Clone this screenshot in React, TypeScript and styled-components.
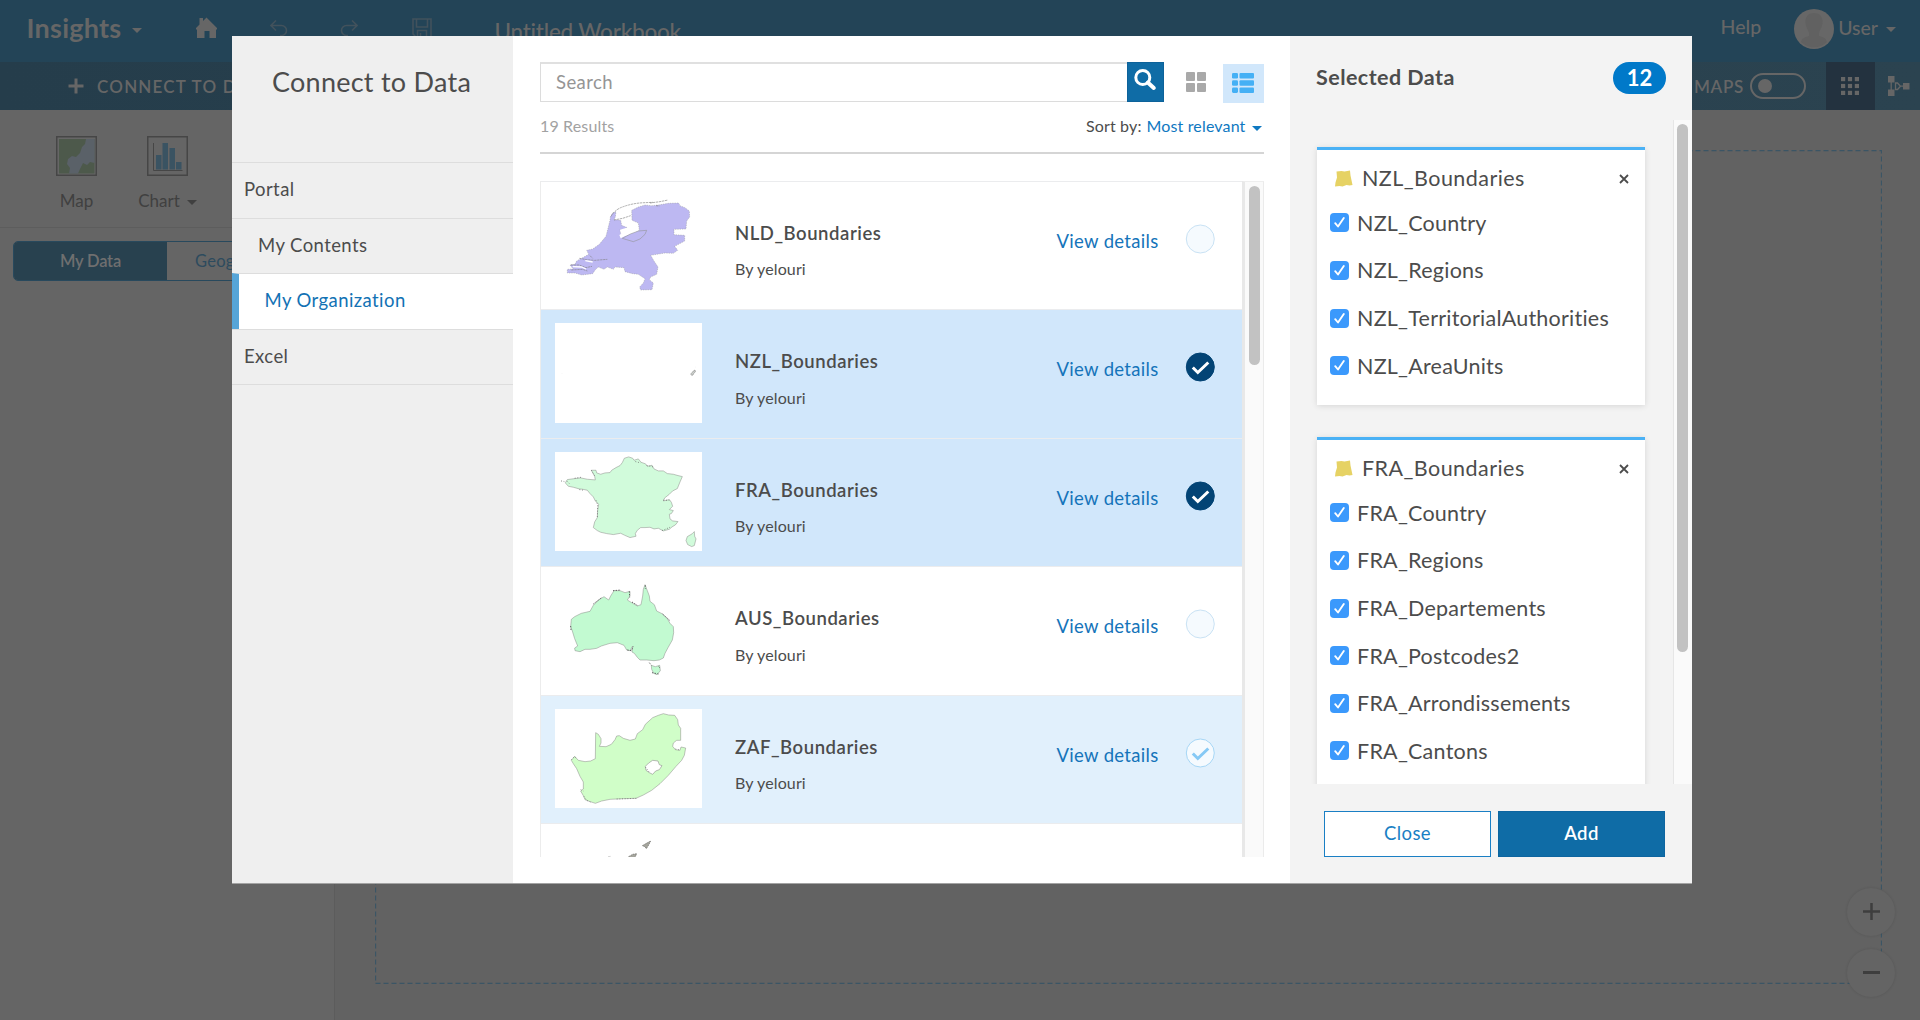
import React from 'react';
import styled, { createGlobalStyle } from 'styled-components';

const GlobalStyle = createGlobalStyle`
  *, *::before, *::after { box-sizing: border-box; }
  body { margin: 0; overflow: hidden; background: #626262; }
  svg { display: block; flex: none; }
`;

const Page = styled.div`
  width: 1920px;
  height: 1020px;
  display: flex;
  flex-direction: column;
  font-family: Lato, 'Open Sans', sans-serif;
  color: #666;
`;

/* ---------- Workbook behind the dialog ---------- */

const Header = styled.header`
  height: 62px;
  flex: none;
  display: flex;
  align-items: flex-start;
  justify-content: space-between;
  background: #234457;
`;

const HeaderGroup = styled.div`
  display: flex;
  align-items: flex-start;
`;

const HeaderText = styled.span<{ $size: number; $weight?: number; $top: number; $left: number; $spacing?: number }>`
  font-size: ${p => p.$size}px;
  line-height: 30px;
  font-weight: ${p => p.$weight ?? 400};
  letter-spacing: ${p => p.$spacing ?? 0}px;
  margin: ${p => p.$top}px 0 0 ${p => p.$left}px;
  white-space: nowrap;
`;

const HeaderIcon = styled.span<{ $top: number; $left: number }>`
  margin: ${p => p.$top}px 0 0 ${p => p.$left}px;
`;

const Caret = styled.i<{ $color: string; $drop?: number }>`
  display: block;
  width: 0;
  height: 0;
  margin-top: ${p => p.$drop ?? 0}px;
  border-left: 5px solid transparent;
  border-right: 5px solid transparent;
  border-top: 5px solid ${p => p.$color};
`;

const Toolbar = styled.div`
  height: 48px;
  flex: none;
  display: flex;
  justify-content: space-between;
  background: linear-gradient(90deg, #253d4b, #2b4350);
`;

const ConnectButton = styled.div`
  display: flex;
  align-items: center;
  gap: 13px;
  padding-left: 68px;
  font-size: 17px;
  font-weight: 600;
  letter-spacing: 1.2px;
`;

const ToolbarRight = styled.div`
  display: flex;
  align-items: center;
  font-size: 17px;
  font-weight: 600;
  letter-spacing: 0.7px;
`;

const Toggle = styled.span`
  width: 56px;
  height: 26px;
  margin: 0 20px 0 6px;
  padding: 4px 6px;
  border: 2px solid #666;
  border-radius: 13px;
`;

const Knob = styled.i`
  display: block;
  width: 14px;
  height: 14px;
  border-radius: 50%;
  background: #666;
`;

const ToolButton = styled.span<{ $active?: boolean }>`
  width: ${p => (p.$active ? 48.5 : 45.5)}px;
  height: 48px;
  display: flex;
  align-items: center;
  padding-left: ${p => (p.$active ? 15 : 13.5)}px;
  background: ${p => (p.$active ? '#23323f' : 'transparent')};
`;

const Workspace = styled.div`
  flex: 1;
  display: flex;
`;

const DataPane = styled.aside`
  width: 335px;
  border-right: 1px solid #5c5c5c;
  background: #656565;
`;

const CardTools = styled.div`
  height: 118px;
  display: flex;
  padding: 26px 0 0 48px;
  border-bottom: 1px solid #5d5d5d;
  color: #404040;
`;

const CardTool = styled.div`
  width: 57px;
  margin-right: 34px;
  display: flex;
  flex-direction: column;
  align-items: center;
  font-size: 17px;
  line-height: 20px;
  gap: 15px;
`;

const CardToolLabel = styled.span`
  display: flex;
  align-items: center;
  gap: 7px;
  white-space: nowrap;
`;

const Segmented = styled.div`
  width: 308px;
  height: 40px;
  margin: 13px 0 0 13px;
  display: flex;
  border: 1px solid #28495d;
  border-radius: 5px;
  overflow: hidden;
  font-size: 16.5px;
  line-height: 38px;
`;

const Segment = styled.span<{ $on?: boolean }>`
  width: 154px;
  padding-left: ${p => (p.$on ? 46 : 28)}px;
  background: ${p => (p.$on ? '#28414f' : 'transparent')};
  color: ${p => (p.$on ? '#6f6f6f' : '#2d4b5e')};
  font-weight: ${p => (p.$on ? 600 : 400)};
  letter-spacing: ${p => (p.$on ? -0.2 : 0.2)}px;
`;

const Canvas = styled.main`
  flex: 1;
  position: relative;
  padding: 40px 38px 36px 40px;
`;

const DropArea = styled.svg`
  width: 1507px;
  height: 834px;
`;

const ZoomStack = styled.div`
  position: absolute;
  right: 25px;
  bottom: 23px;
  display: flex;
  flex-direction: column;
  gap: 13px;
`;

const ZoomButton = styled.span`
  width: 48px;
  height: 48px;
  border-radius: 50%;
  display: flex;
  justify-content: center;
  padding-top: 14.5px;
  background: #646464;
  box-shadow: 0 0 3px rgba(0, 0, 0, 0.12);
`;

/* ---------- Dialog ---------- */

const Dialog = styled.section`
  position: fixed;
  left: 232px;
  top: 36px;
  width: 1460px;
  height: 848px;
  display: grid;
  grid-template-columns: 281px 777px 402px;
  grid-template-rows: 847px;
  border-bottom: 1px solid #a3a3a3;
  background: #fff;
  color: #4c4c4c;
`;

const Sources = styled.nav`
  background: #efefef;
`;

const DialogTitle = styled.h1`
  height: 126px;
  margin: 0;
  padding: 31px 0 0 40px;
  font-size: 27px;
  line-height: 30px;
  font-weight: 400;
  letter-spacing: 0.25px;
`;

const Source = styled.div<{ $indent: number; $active?: boolean }>`
  height: 55.6px;
  padding-left: ${p => p.$indent - (p.$active ? 7 : 0)}px;
  border-top: 1px solid #ddd;
  ${p => p.$active && 'border-left: 7px solid #56a5d8;'}
  background: ${p => (p.$active ? '#fff' : '#efefef')};
  color: ${p => (p.$active ? '#1272b4' : '#4c4c4c')};
  font-size: 18.5px;
  line-height: 53.5px;
  letter-spacing: 0.42px;
`;

const SourcesEnd = styled.div`
  border-top: 1px solid #ddd;
`;

const Browser = styled.div`
  min-height: 0;
  display: flex;
  flex-direction: column;
  padding: 26px 26.5px 26px 27px;
`;

const SearchRow = styled.div`
  display: flex;
  flex: none;
  height: 41px;
`;

const SearchField = styled.div`
  width: 587px;
  height: 40px;
  padding-left: 15px;
  border: 1px solid #dcdcdc;
  border-top: 2px solid #e0e0e0;
  border-right: 0;
  color: #959595;
  font-size: 18.5px;
  line-height: 36px;
  letter-spacing: 0.4px;
`;

const SearchButton = styled.span`
  width: 37.5px;
  height: 40px;
  padding: 6px 0 0 6px;
  background: #0f6ca6;
  border: 1px solid #0d629a;
`;

const ViewButton = styled.span<{ $on?: boolean }>`
  width: 41px;
  height: 39px;
  margin: ${p => (p.$on ? 2 : 1)}px 0 0 ${p => (p.$on ? 6.5 : 11)}px;
  padding-bottom: 1px;
  display: flex;
  align-items: center;
  justify-content: center;
  background: ${p => (p.$on ? '#d1e7fb' : 'transparent')};
`;

const ResultsBar = styled.div`
  height: 51px;
  flex: none;
  display: flex;
  justify-content: space-between;
  border-bottom: 2px solid #d5d5d5;
  font-size: 16px;
  line-height: 46.5px;
  letter-spacing: 0.15px;
`;

const Count = styled.span`
  color: #a2a2a2;
`;

const SortBy = styled.span`
  display: flex;
  align-items: center;
  height: 46px;
  padding-right: 2px;
`;

const SortValue = styled.span`
  color: #0f78c1;
  margin: 0 6px 0 5px;
`;

const ListFrame = styled.div`
  flex: 1;
  min-height: 0;
  margin-top: 26.5px;
  display: flex;
  overflow: hidden;
  border-left: 1px solid #ececec;
`;

const List = styled.div`
  flex: 1;
`;

const Item = styled.div<{ $tone: Tone }>`
  height: 128.5px;
  display: flex;
  align-items: flex-start;
  border-top: 1px solid #ebecee;
  background: ${p => (p.$tone === 'selected' ? '#d1e7fb' : p.$tone === 'hover' ? '#e1f0fc' : '#fff')};
`;

const Thumb = styled.svg`
  width: 147px;
  height: 99.5px;
  margin: 13.3px 33px 0 14px;
  background: #fff;
`;

const ItemText = styled.div`
  width: 321px;
  padding-top: 36.2px;
`;

const ItemTitle = styled.div`
  font-size: 18.5px;
  line-height: 30px;
  font-weight: 600;
  letter-spacing: 0.55px;
`;

const ItemOwner = styled.div`
  margin-top: 6.5px;
  font-size: 16px;
  line-height: 30px;
  letter-spacing: 0.12px;
`;

const Details = styled.span`
  width: 129px;
  padding-top: 44.2px;
  padding-left: 0.5px;
  color: #1574ba;
  font-size: 18.5px;
  line-height: 30px;
  letter-spacing: 0.32px;
`;

const Pick = styled.svg`
  width: 30px;
  height: 30px;
  margin-top: 42px;
`;

const ListScroll = styled.div`
  width: 22px;
  padding: 4px 3px 0 4px;
  border-top: 1px solid #eee;
  border-left: 3px solid #e8e8e8;
  border-right: 1px solid #ebebeb;
  background: #fafafa;
`;

const ScrollThumb = styled.div<{ $h: number }>`
  width: 11px;
  height: ${p => p.$h}px;
  border-radius: 6px;
  background: #c2c2c2;
`;

const Selection = styled.aside`
  display: flex;
  flex-direction: column;
  background: #f3f3f3;
`;

const SelectionHead = styled.div`
  height: 84px;
  padding: 26px 26px 0 26px;
  display: flex;
  justify-content: space-between;
  align-items: flex-start;
  font-size: 21.5px;
  line-height: 31px;
  font-weight: 700;
  letter-spacing: 0.45px;
`;

const Badge = styled.span`
  width: 53px;
  height: 32px;
  border-radius: 16px;
  background: #0079c9;
  color: #fff;
  text-align: center;
  font-size: 22px;
  line-height: 31px;
  letter-spacing: 0;
`;

const SelectionBody = styled.div`
  height: 664px;
  flex: none;
  display: flex;
  justify-content: space-between;
  overflow: hidden;
`;

const Cards = styled.div`
  padding: 27px 0 0 27px;
`;

const SelectionScroll = styled.div`
  width: 19px;
  padding: 4px 0 0 3px;
  border-left: 1px solid #e6e6e6;
  background: #fafafa;
`;

const Card = styled.div`
  width: 328px;
  margin-bottom: 32px;
  padding-bottom: 13.4px;
  border-top: 3px solid #4ab1f5;
  background: #fff;
  box-shadow: 0 1px 6px rgba(0, 0, 0, 0.12);
`;

const CardHead = styled.div`
  height: 51px;
  padding: 13px 16px 0 17px;
  display: flex;
  align-items: flex-start;
  font-size: 21.5px;
  line-height: 31px;
`;

const CardName = styled.span`
  flex: 1;
  margin-left: 9px;
  letter-spacing: 0.45px;
`;

const Layer = styled.div`
  height: 47.65px;
  display: flex;
  align-items: center;
  gap: 8px;
  padding: 0 0 4px 13px;
  font-size: 21.5px;
  line-height: 30px;
  letter-spacing: 0.24px;
`;

const Checkbox = styled.span`
  width: 19px;
  height: 19px;
  border-radius: 4px;
  background: #3b99fc;
`;

const Actions = styled.div`
  display: flex;
  gap: 7px;
  padding: 27px 0 0 34px;
`;

const Button = styled.span<{ $primary?: boolean }>`
  width: 167px;
  height: 46px;
  border: 1px solid ${p => (p.$primary ? '#0d65a0' : '#1a7fc4')};
  background: ${p => (p.$primary ? '#0f6ca6' : '#fff')};
  color: ${p => (p.$primary ? '#fff' : '#1a7fc4')};
  font-size: 18.5px;
  font-weight: ${p => (p.$primary ? 600 : 400)};
  line-height: 43px;
  text-align: center;
  letter-spacing: 0.4px;
`;

type Tone = 'plain' | 'selected' | 'hover';

const INK = '#8d8f8c';

const NetherlandsMap = () => (
  <Thumb viewBox="75 74 441 298.5">
    <path fill="#bdb8f2" stroke={INK} strokeWidth="1.2" strokeDasharray="4 3" strokeLinejoin="round"
      d="M241 140L248 128 258 124 256 140 252 148 272 150 275 165 292 172 278 180 270 178 272 190 290 196 312 190 328 180 325 158 306 150 305 120 325 110 345 104 365 106 385 104 415 99 446 98 450 106 465 112 478 122 479 140 470 152 468 176 432 177 432 193 464 195 464 212 434 228 443 240 430 249 405 248 362 255 372 272 384 290 380 312 362 320 358 328 370 338 366 358 332 359 329 350 340 338 345 325 325 312 308 310 285 304 282 292 255 290 250 297 232 290 222 297 205 290 196 298 188 310 155 314 135 308 112 308 112 297 130 296 120 284 135 282 140 272 158 262 176 252 170 240 188 236 208 222 228 198 235 170 240 150z" />
    <path fill="#fff" d="M270 178l20-6 12 6 24 2-26 10-28 14-4-10 6-4z" />
    <path fill="#bdb8f2" stroke={INK} strokeWidth="1.6" d="M277 204l24-13 24-9 25-2-5 12-15 14-20 8-20-6z" />
    <path fill="none" stroke="#7b7b7b" strokeWidth="1.8" strokeDasharray="7 2"
      d="M243 138q12-20 34-28 32-12 68-13l24-1M360 98l30-4 24-5M378 106l10 1M252 149l26-5 24-8M122 284l26 0 20 8 18-4M148 264l22 4 24 2 38-3M124 299l34-2 14 5M180 256l8 8" />
    <path fill="none" stroke="#fff" strokeWidth="4" d="M128 289l26 1 14 6M166 271l22 4" />
  </Thumb>
);

const NewZealandMap = () => (
  <Thumb viewBox="75 459 441 298.5">
    <path fill="#cfd3cf" stroke="#858585" strokeWidth="1.8" d="M490 603l5-3 1 6-5 4-2 5-4 1-3-4 5-5z" />
    <circle cx="96" cy="611" r="1.2" fill="#e8e8e8" />
    <circle cx="496" cy="591" r="1" fill="#ddd" />
  </Thumb>
);

const FranceMap = () => (
  <Thumb viewBox="75 66 441 297">
    <g fill="#d1fbdb" stroke={INK} strokeWidth="1.6" strokeLinejoin="round">
      <path d="M277 97L283 84 296 80 308 84 312 90 325 86 333 96 347 101 352 108 366 105 372 116 385 122 400 122 412 130 430 132 444 136 457 139 450 155 442 175 428 182 418 192 404 203 400 212 418 208 424 216 428 228 418 238 430 241 424 250 418 252 420 266 428 272 444 274 436 284 426 290 418 297 400 302 385 294 372 296 360 291 345 292 332 292 322 300 316 310 318 318 300 322 284 315 272 309 250 313 230 310 212 306 202 301 190 292 194 275 202 262 203 240 206 222 196 212 190 200 180 190 172 180 158 177 148 176 130 171 115 168 106 158 112 148 135 145 152 143 172 147 196 149 194 138 184 120 198 120 200 128 212 132 225 128 240 127 245 120 258 112 270 106z" />
      <path d="M493 304l1 14 4 8-5 20-8 3-12-6-5-12 4-12 14-8z" />
    </g>
    <path fill="none" stroke="#6f6f6f" strokeWidth="2.4" strokeDasharray="3 5"
      d="M110 152l8 8M134 144l20-3M148 178l14 2M198 210l5 14-1 40M350 106l20 4M316 94l16 4M396 301l24-10M400 210l18 0M93 152l10 2M184 120l12 20" />
  </Thumb>
);

const AustraliaMap = () => (
  <Thumb viewBox="75 452 441 298.5">
    <g fill="#c2fad1" stroke={INK} strokeWidth="1.6" strokeLinejoin="round">
      <path d="M345 466L352 484 358 500 360 516 373 526 380 545 396 553 412 568 420 582 430 592 431 610 427 632 414 655 405 672 400 686 388 692 372 694 350 692 330 692 322 684 313 672 306 668 308 650 300 664 290 662 282 648 262 640 240 642 214 650 200 657 180 660 165 660 150 667 135 664 134 656 143 650 134 628 127 605 122 592 124 570 134 562 154 552 180 546 190 528 206 512 222 502 236 512 242 500 252 484 270 484 285 490 300 486 300 500 292 512 305 520 322 530 333 526 338 500 340 480z" />
      <path d="M364 708l12 4 13-4 2 16-10 12-10-4-6-12z" />
    </g>
    <path fill="none" stroke="#5f5f5f" strokeWidth="3" strokeDasharray="4 4"
      d="M190 524l26-20M249 484l24-2M298 486l1 18M346 468l0 10M398 554l22 20M122 590l1 12M292 662l12 2 6-12M358 700l6 8M386 712l4 4M306 518l16 10M366 730l20 4" />
  </Thumb>
);

const SouthAfricaMap = () => (
  <Thumb viewBox="75 836 441 298.5">
    <path fill="#d0fec8" stroke={INK} strokeWidth="1.6" strokeLinejoin="round"
      d="M197 907L205 912 213 925 213 938 208 948 228 949 244 942 255 928 260 917 268 916 280 924 300 930 316 926 322 910 338 898 346 882 368 862 385 855 400 850 416 854 434 855 443 868 445 884 452 894 452 930 440 930 430 938 428 948 436 958 450 960 453 950 467 953 463 975 455 990 438 1008 415 1035 390 1060 365 1080 340 1094 318 1104 280 1105 240 1107 215 1112 196 1119 178 1113 165 1108 160 1096 152 1082 160 1076 160 1055 150 1038 140 1015 130 1000 124 990 134 978 145 990 165 994 182 992 196 985z" />
    <path fill="#fff" stroke={INK} strokeWidth="1.8"
      d="M346 1008L356 998 368 990 384 992 388 1003 396 1006 388 1018 377 1022 368 1032 358 1027 348 1020z" />
    <path fill="none" stroke="#777" strokeWidth="2.4" strokeDasharray="3 5"
      d="M124 988l10-10 6 8M152 1078l8 4M162 1098l8 12 14 6M260 1106l60-2M436 956l14 3M346 1010l12 16" />
  </Thumb>
);

const PartialMap = () => (
  <Thumb viewBox="75 1222 441 298.5">
    <path fill="#a5a59d" stroke="#6d6d68" strokeWidth="2" strokeDasharray="5 2"
      d="M337 1248l12-7 13-7-6 12-7 11-4-6zM296 1281l12-7 12-2-4 9-8 8-14 2z" />
    <path stroke="#aaa" strokeWidth="1.5" d="M234 1281l8-1" />
  </Thumb>
);

const PickMark = ({ tone }: { tone: Tone }) => (
  <Pick viewBox="0 0 30 30">
    <circle cx="15.3" cy="15" r="14"
      fill={tone === 'selected' ? '#034475' : '#f5fafe'}
      stroke={tone === 'selected' ? '#034475' : tone === 'hover' ? '#a5d6f6' : '#c9e2f4'} />
    {tone !== 'plain' && (
      <path d="M7.800 15.500l5 5 10.500-10" fill="none" strokeWidth="3"
        stroke={tone === 'selected' ? '#fff' : '#86c9f5'} />
    )}
  </Pick>
);

const ITEMS: { name: string; tone: Tone; Map: React.FC }[] = [
  { name: 'NLD_Boundaries', tone: 'plain', Map: NetherlandsMap },
  { name: 'NZL_Boundaries', tone: 'selected', Map: NewZealandMap },
  { name: 'FRA_Boundaries', tone: 'selected', Map: FranceMap },
  { name: 'AUS_Boundaries', tone: 'plain', Map: AustraliaMap },
  { name: 'ZAF_Boundaries', tone: 'hover', Map: SouthAfricaMap },
];

const CARDS = [
  { name: 'NZL_Boundaries', layers: ['NZL_Country', 'NZL_Regions', 'NZL_TerritorialAuthorities', 'NZL_AreaUnits'] },
  {
    name: 'FRA_Boundaries',
    layers: ['FRA_Country', 'FRA_Regions', 'FRA_Departements', 'FRA_Postcodes2', 'FRA_Arrondissements', 'FRA_Cantons'],
  },
];

const CardIcon = styled.svg`
  width: 19px;
  height: 17px;
  margin-top: 7px;
`;

const RemoveIcon = styled.svg`
  width: 10px;
  height: 10px;
  margin-top: 11px;
`;

const Workbook = () => (
  <>
    <Header>
      <HeaderGroup>
        <HeaderText $size={27} $weight={700} $top={13} $left={26.5} $spacing={0.25}>Insights</HeaderText>
        <HeaderIcon $top={28} $left={10.5}><Caret $color="#666" /></HeaderIcon>
        <HeaderIcon $top={17} $left={54}>
          <svg width="21" height="21" viewBox="0 0 21 21" fill="#666">
            <path d="M0 11L3.500 7.500V1H7v3L10.500 .5 21 11v1.500h-1V21h-6.500v-7h-5v7H1v-8.500H0z" />
          </svg>
        </HeaderIcon>
        <HeaderIcon $top={20} $left={53}>
          <svg width="18" height="16" viewBox="0 0 18 16" fill="none" stroke="#42525c" strokeWidth="1.6">
            <path d="M6 .5L1 5.500l5 5M1 5.500h10.500a5 5 0 0 1 0 10H10" />
          </svg>
        </HeaderIcon>
        <HeaderIcon $top={20} $left={52}>
          <svg width="18" height="16" viewBox="0 0 18 16" fill="none" stroke="#42525c" strokeWidth="1.6">
            <path d="M12 .5l5 5-5 5M17 5.500H6.500a5 5 0 0 0 0 10H8" />
          </svg>
        </HeaderIcon>
        <HeaderIcon $top={18} $left={54}>
          <svg width="20" height="20" viewBox="0 0 20 20" fill="none" stroke="#42525c" strokeWidth="1.6">
            <path d="M1 1h18v18H4l-3-3zM4.500 1v8h11V1M5.500 19v-6.500h9V19M8.500 15v4" />
          </svg>
        </HeaderIcon>
        <HeaderText $size={22.5} $weight={500} $top={16.5} $left={62.5} $spacing={-0.23}>Untitled Workbook</HeaderText>
      </HeaderGroup>
      <HeaderGroup>
        <HeaderText $size={19.5} $weight={500} $top={12} $left={0}>Help</HeaderText>
        <HeaderIcon $top={9} $left={33}>
          <svg width="40" height="40" viewBox="0 0 40 40">
            <circle cx="20" cy="20" r="20" fill="#676767" />
            <path fill="#616161" d="M20 4c6 0 9 4 8.500 10-.5 5-3 7-3.500 10l0 3c4 1 7 2 8 6-7 7-19 7-26 0 1-4 4-5 8-6v-3c-.5-3-3-5-3.500-10C11 8 14 4 20 4z" />
          </svg>
        </HeaderIcon>
        <HeaderText $size={19.5} $weight={500} $top={13} $left={4}>User</HeaderText>
        <HeaderIcon $top={27} $left={8}><Caret $color="#666" /></HeaderIcon>
        <HeaderIcon $top={0} $left={24} />
      </HeaderGroup>
    </Header>
    <Toolbar>
      <ConnectButton>
        <svg width="16" height="16" viewBox="0 0 16 16" stroke="#666" strokeWidth="3"><path d="M8 .5v15M.5 8h15" /></svg>
        CONNECT TO DATA
      </ConnectButton>
      <ToolbarRight>
        MAPS
        <Toggle><Knob /></Toggle>
        <ToolButton $active>
          <svg width="18" height="18" viewBox="0 0 18 18" fill="#666">
            {[0, 6.9, 13.8].map(y => [0, 6.9, 13.8].map(x => <rect key={`${x}-${y}`} x={x} y={y} width="4.200" height="4.200" />))}
          </svg>
        </ToolButton>
        <ToolButton>
          <svg width="22" height="20" viewBox="0 0 22 20" fill="#666">
            <path d="M0 0h6.500v6.500H0zM0 13.500h6.500V20H0zM15 7h6.500v6.500H15z" />
            <path d="M3.200 6v8M7.500 7h2l3 3.200-3 3.300h-2zM12.500 10.200H15" fill="none" stroke="#666" strokeWidth="1.300" />
          </svg>
        </ToolButton>
      </ToolbarRight>
    </Toolbar>
    <Workspace>
      <DataPane>
        <CardTools>
          <CardTool>
            <svg width="41" height="40" viewBox="0 0 41 40">
              <rect x=".75" y=".75" width="39.500" height="38.500" fill="#666" stroke="#464646" strokeWidth="1.500" />
              <path fill="#4d594b" d="M3 3h35.500v34.500H3z" />
              <path fill="#5a6168" d="M30 3H38.500V27L34 26 31 29 27 27 24 33 22 37.500H13L14 32 11 28 12 23 16 20 20 21 24 17 26 11 29 8z" />
            </svg>
            Map
          </CardTool>
          <CardTool>
            <svg width="41" height="40" viewBox="0 0 41 40">
              <rect x=".75" y=".75" width="39.500" height="38.500" fill="none" stroke="#464646" strokeWidth="1.500" />
              <path fill="none" stroke="#464646" d="M6.500 7v27.500h29" />
              <path fill="#3a5362" d="M9 19h5.500v14.500H9zM15.500 7H21v26.500h-5.500zM22.500 12H28v21.500h-5.500zM29 26h5.500v7.500H29z" />
            </svg>
            <CardToolLabel>Chart <Caret $color="#404040" $drop={2} /></CardToolLabel>
          </CardTool>
        </CardTools>
        <Segmented>
          <Segment $on>My Data</Segment>
          <Segment>Geographic</Segment>
        </Segmented>
      </DataPane>
      <Canvas>
        <DropArea viewBox="0 0 1507 834">
          <path d="M.5 .5H1506.500V833.500H.5z" fill="none" stroke="#3b5565" strokeWidth="1.300" strokeDasharray="5 3" />
        </DropArea>
        <ZoomStack>
          <ZoomButton>
            <svg width="17" height="17" stroke="#3e3e3e" strokeWidth="2.500"><path d="M8.500 0v17M0 8.500h17" /></svg>
          </ZoomButton>
          <ZoomButton>
            <svg width="17" height="17" stroke="#3e3e3e" strokeWidth="3"><path d="M0 8.500h17" /></svg>
          </ZoomButton>
        </ZoomStack>
      </Canvas>
    </Workspace>
  </>
);

export default function App() {
  return (
    <Page>
      <GlobalStyle />
      <Workbook />
      <Dialog>
        <Sources>
          <DialogTitle>Connect to Data</DialogTitle>
          <Source $indent={12}>Portal</Source>
          <Source $indent={26}>My Contents</Source>
          <Source $indent={32.5} $active>My Organization</Source>
          <Source $indent={12}>Excel</Source>
          <SourcesEnd />
        </Sources>
        <Browser>
          <SearchRow>
            <SearchField>Search</SearchField>
            <SearchButton>
              <svg width="23" height="23" viewBox="0 0 23 23" fill="none" stroke="#fff">
                <circle cx="8.800" cy="8.500" r="7" strokeWidth="3" />
                <path d="M13.800 13.500l6 5.500" strokeWidth="4" strokeLinecap="round" />
              </svg>
            </SearchButton>
            <ViewButton>
              <svg width="20" height="20" viewBox="0 0 20 20" fill="#a9a9a9">
                <rect width="9" height="9" rx="1" /><rect x="11" width="9" height="9" rx="1" />
                <rect y="11" width="9" height="9" rx="1" /><rect x="11" y="11" width="9" height="9" rx="1" />
              </svg>
            </ViewButton>
            <ViewButton $on>
              <svg width="22" height="20" viewBox="0 0 22 20" fill="#45b0f5">
                {[0, 7.2, 14.4].map(y => (
                  <g key={y}>
                    <rect y={y} width="6" height="5.500" rx="1.300" />
                    <rect x="7.500" y={y} width="14.500" height="5.500" rx="1" />
                  </g>
                ))}
              </svg>
            </ViewButton>
          </SearchRow>
          <ResultsBar>
            <Count>19 Results</Count>
            <SortBy>Sort by:<SortValue>Most relevant</SortValue><Caret $color="#0f78c1" $drop={4} /></SortBy>
          </ResultsBar>
          <ListFrame>
            <List>
              {ITEMS.map(({ name, tone, Map }) => (
                <Item key={name} $tone={tone}>
                  <Map />
                  <ItemText>
                    <ItemTitle>{name}</ItemTitle>
                    <ItemOwner>By yelouri</ItemOwner>
                  </ItemText>
                  <Details>View details</Details>
                  <PickMark tone={tone} />
                </Item>
              ))}
              <Item $tone="plain"><PartialMap /></Item>
            </List>
            <ListScroll><ScrollThumb $h={179} /></ListScroll>
          </ListFrame>
        </Browser>
        <Selection>
          <SelectionHead>Selected Data<Badge>12</Badge></SelectionHead>
          <SelectionBody>
            <Cards>
              {CARDS.map(card => (
                <Card key={card.name}>
                  <CardHead>
                    <CardIcon viewBox="0 0 19 17">
                      <path fill="#e6d264" d="M2.500 1.500l5-.5 3 .5L16 .5l.5 5 2 9.500-3 .5-3-.5-4 1.500-3-.5-4.500.5.5-4 1.500-5z" />
                    </CardIcon>
                    <CardName>{card.name}</CardName>
                    <RemoveIcon viewBox="0 0 10 10" stroke="#4c4c4c" strokeWidth="1.800">
                      <path d="M1 1l8 8M9 1L1 9" />
                    </RemoveIcon>
                  </CardHead>
                  {card.layers.map(layer => (
                    <Layer key={layer}>
                      <Checkbox>
                        <svg width="19" height="19" viewBox="0 0 19 19" fill="none" stroke="#fff" strokeWidth="1.900" strokeLinecap="round" strokeLinejoin="round">
                          <path d="M5.200 10.200l2.800 3.300 5.800-8.500" />
                        </svg>
                      </Checkbox>
                      {layer}
                    </Layer>
                  ))}
                </Card>
              ))}
            </Cards>
            <SelectionScroll><ScrollThumb $h={527.5} /></SelectionScroll>
          </SelectionBody>
          <Actions>
            <Button>Close</Button>
            <Button $primary>Add</Button>
          </Actions>
        </Selection>
      </Dialog>
    </Page>
  );
}
